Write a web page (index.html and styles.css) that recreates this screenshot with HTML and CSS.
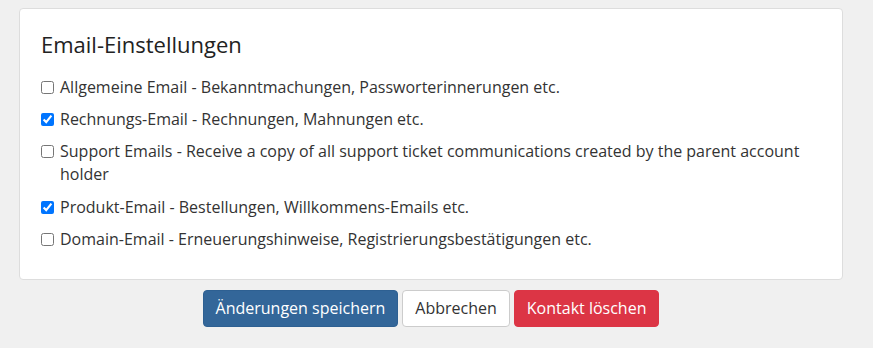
FILE: index.html
```html
<!DOCTYPE html>
<html lang="de">
<head>
<meta charset="utf-8">
<link rel="stylesheet" href="styles.css">
</head>
<body>
<div class="page">
  <div class="card">
    <h3 class="card-title">Email-Einstellungen</h3>
    <label class="opt"><input type="checkbox"><span>Allgemeine Email - Bekanntmachungen, Passworterinnerungen etc.</span></label>
    <label class="opt"><input type="checkbox" checked><span>Rechnungs-Email - Rechnungen, Mahnungen etc.</span></label>
    <label class="opt opt-wrap"><input type="checkbox"><span>Support Emails - Receive a copy of all support ticket communications created by the parent account holder</span></label>
    <label class="opt"><input type="checkbox" checked><span>Produkt-Email - Bestellungen, Willkommens-Emails etc.</span></label>
    <label class="opt"><input type="checkbox"><span>Domain-Email - Erneuerungshinweise, Registrierungsbestätigungen etc.</span></label>
  </div>
  <div class="actions">
    <button class="btn btn-primary">Änderungen speichern</button>
    <button class="btn btn-default">Abbrechen</button>
    <button class="btn btn-danger">Kontakt löschen</button>
  </div>
</div>
</body>
</html>
```
FILE: styles.css
```css
html, body {
  margin: 0;
  padding: 0;
  background: #f0f0f0;
  font-family: "Open Sans", "Liberation Sans", sans-serif;
  color: #333;
}
.page {
  padding: 8px 30px 0 19px;
}
.card {
  background: #fff;
  border: 1px solid #ddd;
  border-radius: 4px;
  padding: 20px 20px 28px 21px;
}
.card-title {
  margin: 0 0 17px 0;
  font-size: 22px;
  font-weight: 400;
  line-height: 30px;
  color: #222;
}
.opt {
  display: flex;
  align-items: flex-start;
  font-size: 16px;
  line-height: 23px;
  margin-bottom: 9px;
  color: #333;
}
.opt-wrap {
  margin-bottom: 10px;
}
.opt:last-child {
  margin-bottom: 0;
}
.opt input {
  margin: 5px 6px 0 0;
  width: 13px;
  height: 13px;
  flex: none;
}
.actions {
  display: flex;
  justify-content: center;
  gap: 4px;
  margin-top: 10px;
}
.btn {
  font-family: "Open Sans", "Liberation Sans", sans-serif;
  font-size: 16px;
  line-height: 21px;
  padding: 7px 12px;
  border: 1px solid transparent;
  border-radius: 4px;
  cursor: pointer;
}
.btn-primary {
  background: #336699;
  border-color: #2e6092;
  color: #fff;
}
.btn-default {
  background: #fff;
  border-color: #ccc;
  color: #333;
}
.btn-danger {
  background: #dc3545;
  border-color: #dc3545;
  color: #fff;
}
```
